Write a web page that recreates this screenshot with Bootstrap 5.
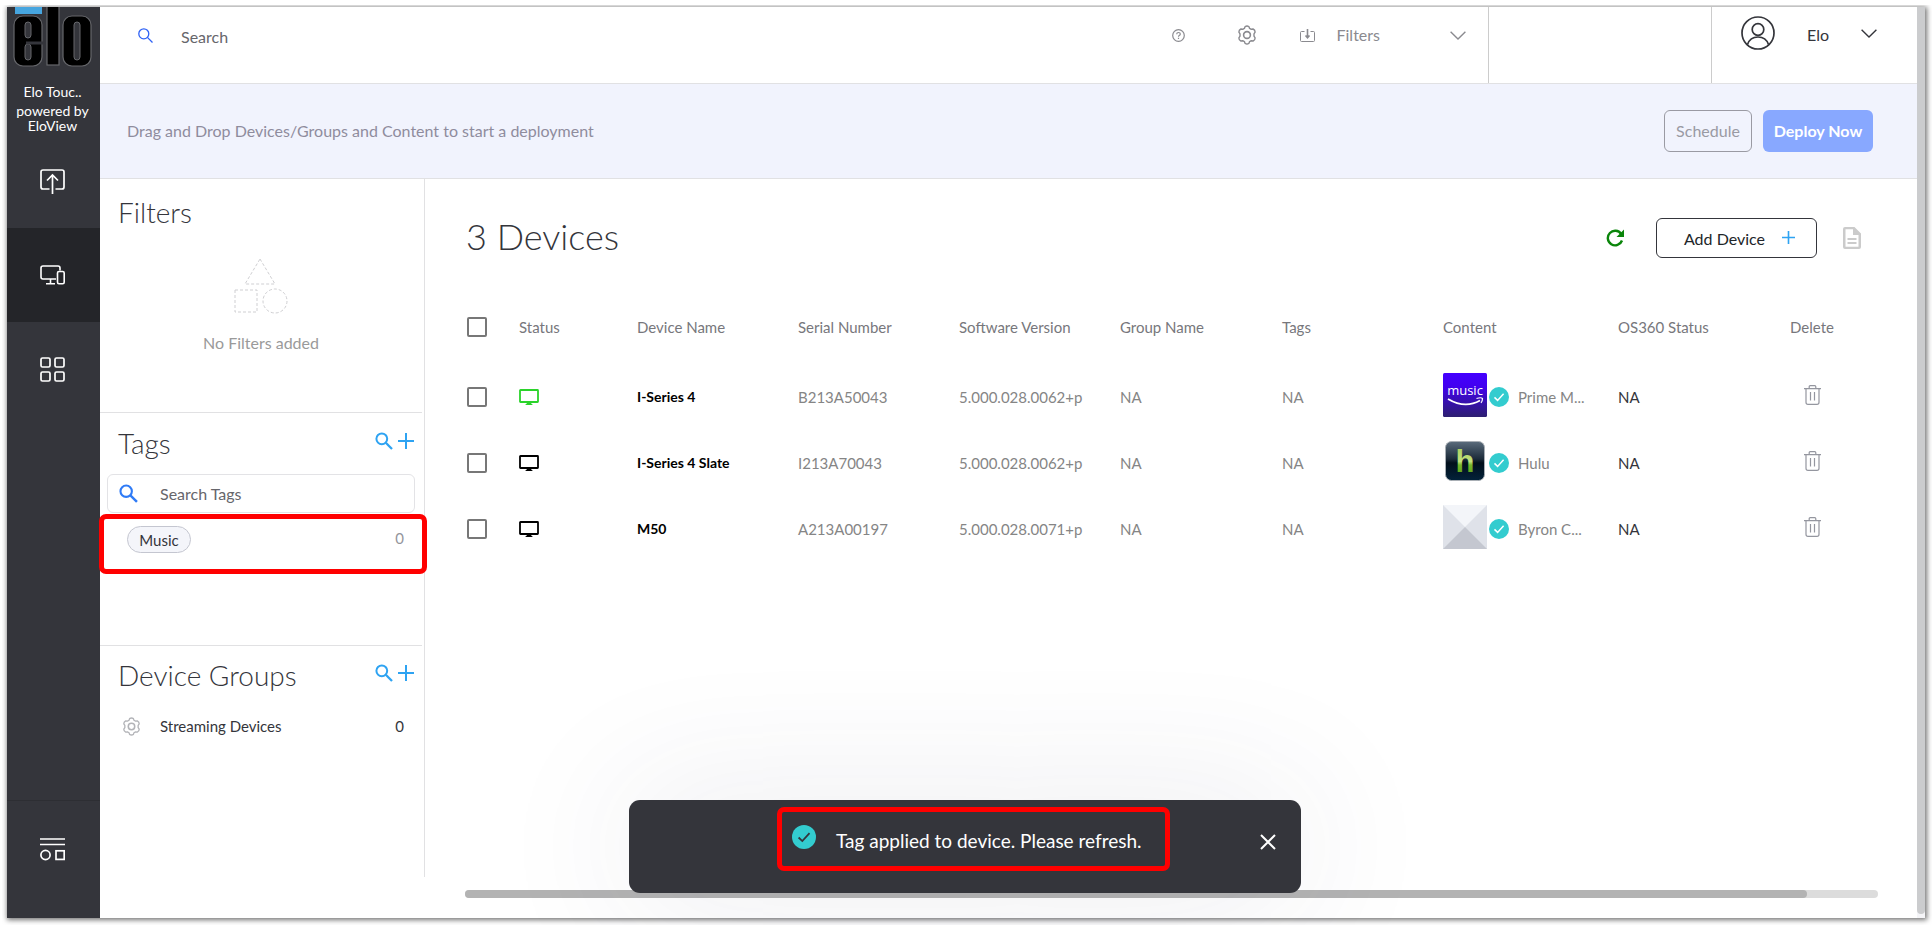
<!DOCTYPE html>
<html lang="en">
<head>
<meta charset="utf-8">
<meta name="viewport" content="width=device-width, initial-scale=1">
<title>EloView – Devices</title>
<link href="https://cdn.jsdelivr.net/npm/bootstrap@5.3.0/dist/css/bootstrap.min.css" rel="stylesheet">
<style>
  :root { --ink:#34353b; --muted:#8a8a8f; --line:#e1e1e3; --sky:#2ea3f2; --teal:#33cccf; }
  body { font-family:Lato,"Open Sans",sans-serif; font-size:15px; line-height:20px; color:var(--ink); background:#fff; }
  svg { display:block; flex:none; fill:none; }
  svg:not([stroke]) { stroke:currentColor; }
  .btn { --bs-btn-font-size:16px; --bs-btn-line-height:20px; }
  .icon-btn { border:0; padding:0; background:none; color:inherit; }
  .frame { margin:7px; min-height:calc(100vh - 14px); box-shadow:1px 1px 5px 1px rgba(0,0,0,.55); clip-path:inset(-2px -7px -7px -5px); }

  .rail { width:93px; flex:none; background:var(--ink); color:#fff; }
  .brand { height:127px; font-size:14px; line-height:15px; padding-right:2px; }
  .rail a { color:#fff; height:94px; padding-right:2px; display:flex; align-items:center; justify-content:center; }
  .rail a.current { background:#242529; }
  .rail a.last { height:118px; border-top:1px solid #2d2e33; padding-bottom:20px; }

  .topbar { height:77px; border-bottom:1px solid var(--line); }
  .topbar .row-line { height:56px; }
  .topbar .find { padding-left:38px; gap:28px; }
  .topbar input { width:300px; font-size:16px; color:#5c5c60; margin-top:4px; }
  .topbar .tools { color:var(--muted); font-size:16px; padding-right:22px; }
  .blank-cell { width:223px; border-left:1px solid #ccc; }
  .account { width:206px; border-left:1px solid #ccc; font-size:16px; }
  input::placeholder { color:#66666b; opacity:1; }
  .plain-input { border:0; outline:0; background:none; padding:0; }

  .deploy { height:95px; background:#f1f3fd; border-bottom:1px solid var(--line); color:#8f8c9d; font-size:16px; padding:0 44px 0 27px; }
  .deploy .btn { height:42px; padding:0; border-radius:6px; }
  .btn-sched { width:88px; border:1px solid #9a9aa3; color:#9a9aa3; }
  .btn-deploy { width:110px; background:#88a8ff; color:#fff; font-weight:700; }

  .side { width:325px; flex:none; border-right:1px solid var(--line); margin-bottom:41px; }
  .side section { margin-right:2px; border-bottom:1px solid var(--line); }
  .side section:last-child { border-bottom:0; }
  .side h2 { font-size:28px; line-height:34px; font-weight:300; margin:0; padding-left:18px; }
  .sec-filters { height:234px; padding-top:16px; }
  .sec-tags { height:233px; padding-top:13px; }
  .sec-groups { padding-top:12px; }
  .actions { color:var(--sky); padding:0 8px 4px 0; gap:5px; }
  .empty { color:#9a9a9a; font-size:16px; }
  .tag-search { height:39px; margin:14px 7px 0; border:1px solid #e3e3e6; border-radius:6px; padding-left:11px; gap:22px; color:#2f7bf6; }
  .tag-search input { font-size:16px; }
  .marked { border:5px solid #f00; border-radius:7px; position:relative; z-index:1; }
  .tag-row { height:60px; margin:1px -5px 0 -1px; padding:7px 18px 0 23px; }
  .tag-pill { height:27px; width:64px; border:1px solid #c4c6d0; border-radius:14px; background:#f4f5fa; font-size:15px; line-height:26px; text-align:center; }
  .group-row { padding:0 18px 0 22px; margin-top:24px; }

  .stage { padding:0 39px 0 42px; min-width:0; }
  .stage h1 { font-size:36px; line-height:44px; font-weight:300; margin:0 0 4px -1px; }
  .stage-head { height:116px; padding:2px 17px 0 0; }
  .btn-add { width:161px; height:40px; border:1px solid var(--ink); border-radius:6px; padding:2px 0 0 6px; font-size:16px; }
  .devices { table-layout:fixed; width:100%; color:#858585; }
  .devices th { font-weight:400; color:#77777c; height:69px; padding:0 0 6px; }
  .devices td { height:66px; padding:0; white-space:nowrap; }
  .devices td.dev-name { color:#000; font-size:14px; font-weight:700; }
  .devices .strong { color:var(--ink); }
  .devices .icon-btn { margin-left:14px; color:#94969f; }
  .devices input { appearance:none; display:block; width:20px; height:20px; border:2px solid #777; border-radius:2px; margin:0; }
  .devices .ok { color:#fff; margin:0 9px 0 2px; }
  .hbar { height:8px; border-radius:4px; background:#dcdcdc; margin:0 0 20px -2px; }
  .hbar div { height:8px; border-radius:4px; background:#b3b3b3; width:95%; }
  .vbar { width:8px; flex:none; background:#f5f5f8; padding-bottom:4px; }
  .vbar div { height:100%; background:#cbccce; border-radius:0 0 4px 4px; }

  .notice { position:absolute; left:0; right:2px; bottom:25px; margin:auto; width:672px; height:93px; border-radius:11px; background:var(--ink); color:#fff; box-shadow:0 0 150px rgba(52,53,90,.11); }
  .notice .marked { width:393px; height:64px; margin:7px 0 0 148px; padding:3px 0 0 10px; font-size:19px; line-height:24px; gap:20px; }
  .notice .icon-btn { margin:-9px 25px 0 auto; }
</style>
</head>
<body>
<svg width="0" height="0" class="position-absolute" aria-hidden="true">
  <symbol id="gear" viewBox="0 0 20 20"><path stroke-width="1.4" stroke-linejoin="round" d="M8 1.7Q10 .3 12 1.7L12.6 3.4 14.3 4.3 16.1 4Q18.2 5 18.1 7.2L17 8.8V11.2L18.1 12.8Q18.2 15 16.1 16L14.3 15.7 12.6 16.6 12 18.3Q10 19.7 8 18.3L7.4 16.6 5.7 15.7 3.9 16Q1.8 15 1.9 12.8L3 11.2V8.8L1.9 7.2Q1.8 5 3.9 4L5.7 4.3 7.4 3.4Z"/><circle cx="10" cy="10" r="3.4" stroke-width="1.6"/></symbol>
  <symbol id="lens" viewBox="0 0 18 18"><circle cx="6.8" cy="6.8" r="5.4" stroke-width="2"/><path stroke-width="2.3" d="M10.8 10.8 17 17"/></symbol>
  <symbol id="plus" viewBox="0 0 16 16"><path stroke-width="2" d="M8 0V16M0 8H16"/></symbol>
  <symbol id="monitor" viewBox="0 0 20 17"><rect x="1" y="1" width="18" height="12" rx=".5" stroke-width="1.8"/><path stroke="none" fill="currentColor" d="M8 13H12L12.4 14.8 14 16H6L7.6 14.8Z"/></symbol>
  <symbol id="tick" viewBox="0 0 20 20"><circle cx="10" cy="10" r="10" stroke="none" fill="#33cccf"/><path stroke-width="1.5" d="M5.5 10.4 8.6 13.4 14.6 6.8"/></symbol>
  <symbol id="bin" viewBox="0 0 17 20"><path stroke-width="1.2" d="M0 3.6H17M5.2 3.4V1.8Q5.2.7 6.2.7H10.8Q11.8.7 11.8 1.8V3.4M2 3.8V17.2Q2 19.3 4 19.3H13Q15 19.3 15 17.2V3.8M6.5 7V15.5M10.5 7V15.5"/></symbol>
  <symbol id="chev" viewBox="0 0 16 9"><path stroke-width="1.4" d="M.6.8 8 8 15.4.8"/></symbol>
</svg>

<div class="frame d-flex position-relative">
  <nav class="rail d-flex flex-column" aria-label="Main">
    <div class="brand text-center">
      <svg class="mx-auto" width="79" height="61" viewBox="0 0 79 61" role="img" aria-label="Elo logo">
        <rect x="2" width="27" height="7" fill="#46a5df" stroke="none"/>
        <g fill="#000" stroke="#66676b" stroke-width="1.2">
          <rect x="1" y="9" width="28" height="50" rx="9"/>
          <rect x="34" y="-2" width="12" height="60"/>
          <rect x="50" y="9" width="28" height="50" rx="9"/>
        </g>
        <g fill="#34353b" stroke="#66676b" stroke-width="1">
          <rect x="12" y="15" width="6" height="16" rx="3"/>
          <rect x="12" y="37" width="6" height="16" rx="3"/>
          <rect x="61" y="15" width="6" height="38" rx="3"/>
        </g>
        <path d="M30 36H13" stroke="#34353b" stroke-width="3"/>
      </svg>
      <div class="mt-2 pt-2 mb-1">Elo Touc..</div>
      <div>powered by EloView</div>
    </div>
    <a href="#" aria-label="Upload content"><svg width="25" height="25" viewBox="0 0 25 25" stroke-width="1.7"><path d="M9.500 20H3Q1 20 1 18V3Q1 1 3 1H22Q24 1 24 3V18Q24 20 22 20H15.500M12.500 25V6.500M7 11.500 12.500 6 18 11.500"/></svg></a>
    <a href="#" class="current" aria-label="Devices" aria-current="page"><svg width="25" height="20" viewBox="0 0 25 20" stroke-width="1.6"><path d="M16 14H3Q1 14 1 12V3Q1 1 3 1H18Q20 1 20 3V5.500M10.500 14V18.500M6 18.800H15"/><rect x="17.500" y="6.500" width="6.700" height="12.300" rx="1.500"/></svg></a>
    <a href="#" aria-label="Apps"><svg width="25" height="25" viewBox="0 0 25 25" stroke-width="1.7"><rect x="1" y="1" width="9" height="9" rx="1.500"/><rect x="15" y="1" width="9" height="9" rx="1.500"/><rect x="1" y="15" width="9" height="9" rx="1.500"/><rect x="15" y="15" width="9" height="9" rx="1.500"/></svg></a>
    <a href="#" class="last mt-auto" aria-label="More"><svg width="25" height="23" viewBox="0 0 25 23" stroke-width="1.7"><path d="M0 1H25M0 6.500H25"/><circle cx="5.500" cy="17" r="4.600"/><rect x="16" y="12.800" width="8.200" height="8.600"/></svg></a>
  </nav>

  <div class="d-flex flex-column flex-grow-1" style="min-width:0">
    <header class="topbar d-flex">
      <label class="find row-line d-flex align-items-center" for="q">
        <svg width="15" height="15" viewBox="0 0 15 15" stroke="#2f62f5" stroke-width="1.3"><circle cx="5.800" cy="5.800" r="5"/><path d="M9.400 9.400 14.500 14.500"/></svg>
        <input id="q" class="plain-input" placeholder="Search">
      </label>
      <div class="tools row-line d-flex align-items-center ms-auto">
        <button class="icon-btn" aria-label="Help"><svg width="13" height="13" viewBox="0 0 13 13" stroke-width="1.200"><circle cx="6.500" cy="6.500" r="5.800"/><path d="M4.700 5.200Q4.700 3.500 6.500 3.500T8.300 5.100Q8.300 6 7.200 6.500 6.500 6.900 6.500 7.800M6.500 8.800V9.900"/></svg></button>
        <button class="icon-btn ms-5" aria-label="Settings"><svg class="ms-1" width="20" height="20"><use href="#gear"/></svg></button>
        <a href="#" class="d-flex align-items-center text-reset text-decoration-none" style="margin-left:43px;gap:22px">
          <svg width="15" height="13" viewBox="0 0 15 13"><path d="M4.500 2.500H1.500Q.5 2.500 .5 3.500V11.500Q.5 12.500 1.500 12.500H13.500Q14.500 12.500 14.500 11.500V3.500Q14.500 2.500 13.500 2.500H10.500"/><path stroke-width="1.600" d="M7.500 0V8.500M5.500 6.500 7.500 8.700 9.500 6.500"/></svg>
          <span>Filters</span>
          <svg class="ms-5" width="16" height="9"><use href="#chev"/></svg>
        </a>
      </div>
      <div class="blank-cell"></div>
      <div class="account">
        <a href="#" class="row-line d-flex align-items-center text-reset text-decoration-none" style="padding-left:29px">
          <svg class="mb-1" width="34" height="34" viewBox="0 0 34 34" stroke-width="1.700"><circle cx="17" cy="17" r="16"/><circle cx="17" cy="13.500" r="5.800"/><path d="M6.500 28.500Q9 21 17 21T27.500 28.500"/></svg>
          <span style="margin:0 32px">Elo</span>
          <svg class="mb-1" width="16" height="9"><use href="#chev"/></svg>
        </a>
      </div>
    </header>

    <div class="deploy d-flex align-items-center">
      <span>Drag and Drop Devices/Groups and Content to start a deployment</span>
      <button class="btn btn-sched ms-auto">Schedule</button>
      <button class="btn btn-deploy" style="margin-left:11px">Deploy Now</button>
    </div>

    <div class="d-flex flex-grow-1">
      <aside class="side">
        <section class="sec-filters">
          <h2>Filters</h2>
          <div class="empty text-center">
            <svg class="mx-auto" style="margin:29px 0 19px" width="54" height="56" viewBox="0 0 54 56" stroke="#cfcfd2" stroke-dasharray="3 2"><path d="M26 1 41 26H11Z"/><rect x="1" y="32" width="22" height="22"/><circle cx="41" cy="43" r="12"/></svg>
            No Filters added
          </div>
        </section>
        <section class="sec-tags">
          <div class="d-flex align-items-center justify-content-between">
            <h2>Tags</h2>
            <div class="actions d-flex"><button class="icon-btn" aria-label="Search tags"><svg width="18" height="18"><use href="#lens"/></svg></button><button class="icon-btn" aria-label="Add tag"><svg width="16" height="16"><use href="#plus"/></svg></button></div>
          </div>
          <label class="tag-search d-flex align-items-center" for="tagq"><svg width="19" height="19"><use href="#lens"/></svg><input id="tagq" class="plain-input flex-grow-1" placeholder="Search Tags"></label>
          <div class="tag-row marked d-flex justify-content-between"><span class="tag-pill">Music</span><span style="color:#94959c;line-height:25px">0</span></div>
        </section>
        <section class="sec-groups">
          <div class="d-flex align-items-center justify-content-between">
            <h2>Device Groups</h2>
            <div class="actions d-flex"><button class="icon-btn" aria-label="Search groups"><svg width="18" height="18"><use href="#lens"/></svg></button><button class="icon-btn" aria-label="Add group"><svg width="16" height="16"><use href="#plus"/></svg></button></div>
          </div>
          <div class="group-row d-flex align-items-center"><svg width="19" height="19" color="#b3b4b8"><use href="#gear"/></svg><span style="margin-left:19px">Streaming Devices</span><span class="ms-auto">0</span></div>
        </section>
      </aside>

      <main class="stage d-flex flex-column flex-grow-1">
        <div class="stage-head d-flex align-items-center">
          <h1>3 Devices</h1>
          <button class="icon-btn ms-auto" aria-label="Refresh" style="color:#0a850a"><svg width="18" height="18" viewBox="0 0 18 18" stroke-width="2.400"><path d="M15.200 5A7.300 7.300 0 1 0 16 11.500"/><path stroke="none" fill="currentColor" d="M18 .5V8H10.500Z"/></svg></button>
          <button class="btn btn-add d-flex align-items-center justify-content-center" style="margin:0 26px 0 32px;gap:17px">Add Device <svg class="mb-1" width="13" height="13" color="#2ea3f2"><use href="#plus"/></svg></button>
          <button class="icon-btn" aria-label="Export report" style="color:#cbcbcb"><svg width="18" height="22" viewBox="0 0 18 22"><path stroke="none" fill="currentColor" fill-rule="evenodd" d="M2 0H11.500L18 6.500V20Q18 22 16 22H2Q0 22 0 20V2Q0 0 2 0ZM2.500 2.200V19.800H15.500V8H10V2.200Z"/><path stroke-width="1.800" d="M4.500 12H13.500M4.500 16H13.500"/></svg></button>
        </div>
        <table class="devices">
          <colgroup><col style="width:52px"><col style="width:118px"><col style="width:161px"><col style="width:161px"><col style="width:161px"><col style="width:162px"><col style="width:161px"><col style="width:175px"><col style="width:172px"><col style="width:88px"></colgroup>
          <thead><tr><th><input type="checkbox" aria-label="Select all devices"></th><th>Status</th><th>Device Name</th><th>Serial Number</th><th>Software Version</th><th>Group Name</th><th>Tags</th><th>Content</th><th>OS360 Status</th><th>Delete</th></tr></thead>
          <tbody>
            <tr>
              <td><input type="checkbox" aria-label="Select I-Series 4"></td>
              <td><svg width="20" height="17" color="#2bd32b"><use href="#monitor"/></svg></td>
              <td class="dev-name">I-Series 4</td><td>B213A50043</td><td>5.000.028.0062+p</td><td>NA</td><td>NA</td>
              <td><div class="d-flex align-items-center">
                <svg class="mb-1" width="44" height="44" viewBox="0 0 44 44" stroke="none"><defs><linearGradient id="am" x2="0" y2="1"><stop stop-color="#4400ff"/><stop offset=".3" stop-color="#4200f0"/><stop offset="1" stop-color="#2d1f70"/></linearGradient></defs><rect width="44" height="44" rx="1.500" fill="url(#am)"/><text x="22" y="22" text-anchor="middle" font-family="Open Sans,sans-serif" font-size="13" fill="#fff">music</text><path stroke="#fff" stroke-width="1.800" d="M5 26Q22 36 37 27.500"/><path stroke="#fff" stroke-width="1.200" d="M33.500 25.500Q38 24 39.500 25.500 39.500 28 38 30"/></svg>
                <svg class="ok" width="20" height="20"><use href="#tick"/></svg><span>Prime M...</span></div></td>
              <td class="strong">NA</td><td><button class="icon-btn" aria-label="Delete I-Series 4"><svg width="17" height="20"><use href="#bin"/></svg></button></td>
            </tr>
            <tr>
              <td><input type="checkbox" aria-label="Select I-Series 4 Slate"></td>
              <td><svg width="20" height="17" color="#000"><use href="#monitor"/></svg></td>
              <td class="dev-name">I-Series 4 Slate</td><td>I213A70043</td><td>5.000.028.0062+p</td><td>NA</td><td>NA</td>
              <td><div class="d-flex align-items-center">
                <svg class="mb-1" width="44" height="44" viewBox="0 0 44 44" stroke="none"><defs><linearGradient id="hb" x2="0" y2="1"><stop stop-color="#5b6c7c"/><stop offset=".45" stop-color="#1c2b3a"/><stop offset=".55" stop-color="#020f1b"/><stop offset="1" stop-color="#03223a"/></linearGradient><linearGradient id="hg" x2="0" y2="1"><stop stop-color="#a4cc58"/><stop offset=".5" stop-color="#c3e07c"/><stop offset=".6" stop-color="#76b52a"/><stop offset="1" stop-color="#4f9a12"/></linearGradient></defs><rect x="2.500" y="2.500" width="39" height="39" rx="6" fill="url(#hb)" stroke="#a9afb5"/><text x="22" y="33" text-anchor="middle" font-family="Liberation Sans,sans-serif" font-weight="700" font-size="31" fill="url(#hg)">h</text></svg>
                <svg class="ok" width="20" height="20"><use href="#tick"/></svg><span>Hulu</span></div></td>
              <td class="strong">NA</td><td><button class="icon-btn" aria-label="Delete I-Series 4 Slate"><svg width="17" height="20"><use href="#bin"/></svg></button></td>
            </tr>
            <tr>
              <td><input type="checkbox" aria-label="Select M50"></td>
              <td><svg width="20" height="17" color="#000"><use href="#monitor"/></svg></td>
              <td class="dev-name">M50</td><td>A213A00197</td><td>5.000.028.0071+p</td><td>NA</td><td>NA</td>
              <td><div class="d-flex align-items-center">
                <svg class="mb-1" width="44" height="44" viewBox="0 0 44 44" stroke="none"><path fill="#dfe2e9" d="M0 0H44V44H0Z"/><path fill="#f3f5f9" d="M0 0H44L22 22Z"/><path fill="#c4c7d0" d="M0 44H44L22 22Z"/></svg>
                <svg class="ok" width="20" height="20"><use href="#tick"/></svg><span>Byron C...</span></div></td>
              <td class="strong">NA</td><td><button class="icon-btn" aria-label="Delete M50"><svg width="17" height="20"><use href="#bin"/></svg></button></td>
            </tr>
          </tbody>
        </table>
        <div class="hbar mt-auto"><div></div></div>
      </main>
    </div>
  </div>
  <div class="vbar"><div></div></div>

  <div class="notice d-flex" role="status">
    <div class="marked d-flex align-items-center">
      <svg class="mb-2" style="color:#34353b" width="24" height="24"><use href="#tick"/></svg>
      <span>Tag applied to device. Please refresh.</span>
    </div>
    <button class="icon-btn" aria-label="Close"><svg width="16" height="16" viewBox="0 0 16 16" stroke-width="2"><path d="M1 1 15 15M15 1 1 15"/></svg></button>
  </div>
</div>
<script src="https://cdn.jsdelivr.net/npm/bootstrap@5.3.0/dist/js/bootstrap.bundle.min.js"></script>
</body>
</html>
